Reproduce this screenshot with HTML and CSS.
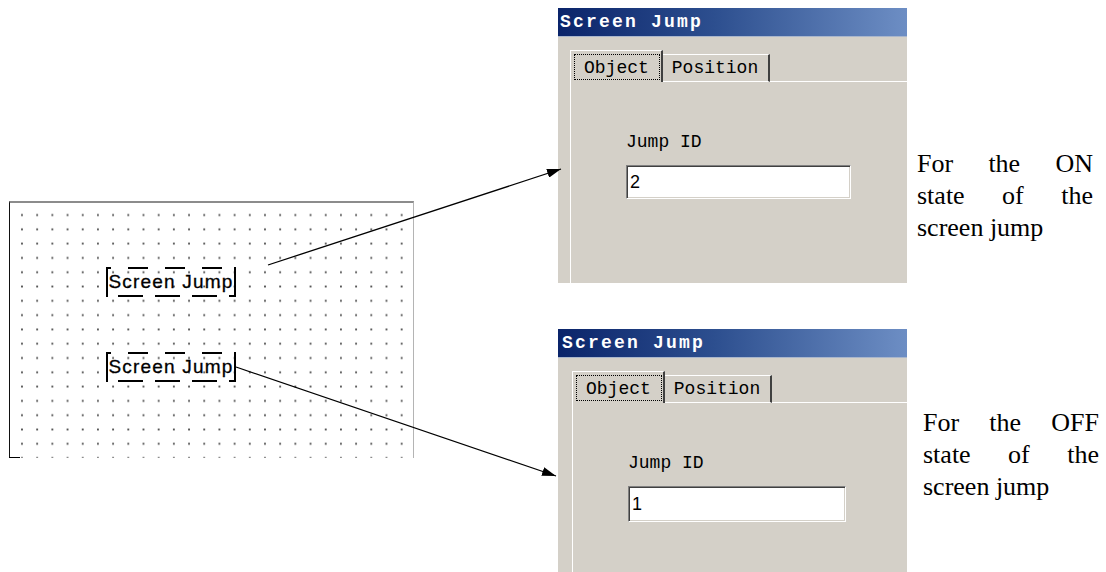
FILE: index.html
```html
<!DOCTYPE html>
<html lang="en">
<head>
  <meta charset="UTF-8">
  <title>Screen Jump</title>
  <link rel="stylesheet" href="styles.css">
</head>
<body>
  <div class="page">
    <div class="editor">
      <div class="canvas">
        <div class="obj obj-on">Screen Jump</div>
        <div class="obj obj-off">Screen Jump</div>
      </div>
    </div>

    <div class="dialogs">
      <div class="dialog">
        <div class="titlebar">Screen Jump</div>
        <div class="dlg-body">
          <div class="tabs">
            <div class="tab active"><span class="focus">Object</span></div>
            <div class="tab">Position</div>
            <div class="tab-fill"></div>
          </div>
          <div class="panel">
            <div class="field-label">Jump ID</div>
            <div class="textbox">2</div>
          </div>
        </div>
      </div>

      <div class="dialog dialog-off">
        <div class="titlebar">Screen Jump</div>
        <div class="dlg-body">
          <div class="tabs">
            <div class="tab active"><span class="focus">Object</span></div>
            <div class="tab">Position</div>
            <div class="tab-fill"></div>
          </div>
          <div class="panel">
            <div class="field-label">Jump ID</div>
            <div class="textbox">1</div>
          </div>
        </div>
      </div>
    </div>

    <div class="notes">
      <p class="note note-on">
        <span class="line">For the ON</span>
        <span class="line">state of the</span>
        <span class="line last">screen jump</span>
      </p>
      <p class="note note-off">
        <span class="line">For the OFF</span>
        <span class="line">state of the</span>
        <span class="line last">screen jump</span>
      </p>
    </div>

    <!-- callout arrows from the canvas objects to their dialogs -->
    <svg class="arrows" width="1106" height="572" viewBox="0 0 1106 572">
      <defs>
        <marker id="head" viewBox="0 0 14 9" refX="14" refY="4.5" markerWidth="14" markerHeight="9" markerUnits="userSpaceOnUse" orient="auto">
          <path d="M0 0 L14 4.5 L0 9 z" fill="#000"/>
        </marker>
      </defs>
      <line x1="268" y1="265" x2="561" y2="169" stroke="#000" stroke-width="1.3" marker-end="url(#head)"/>
      <line x1="236" y1="367" x2="556" y2="476" stroke="#000" stroke-width="1.3" marker-end="url(#head)"/>
    </svg>
  </div>
</body>
</html>
```

FILE: styles.css
```css
body {
  margin: 0;
  background: #fff;
  overflow: hidden;
}
.page {
  position: relative;
  width: 1106px;
  height: 572px;
  display: flex;
  overflow: hidden;
}

/* editor canvas */
.editor {
  flex: none;
  width: 558px;
}
.canvas {
  position: relative;
  box-sizing: border-box;
  width: 405px;
  height: 257px;
  margin: 201px 0 0 9px;
  border-top: 2px solid #8c8c8c;
  border-left: 1px solid #111;
  border-right: 1px solid #b4b4b4;
  background-image: radial-gradient(circle, #555 0, #555 0.8px, transparent 1.3px);
  background-size: 15.2px 14.3px;
  background-position: 4.4px 4.9px;
}
.canvas::after {
  content: "";
  position: absolute;
  left: -1px;
  bottom: 0;
  width: 11px;
  height: 1px;
  background: #000;
}
.obj {
  position: absolute;
  left: 96px;
  box-sizing: border-box;
  width: 130px;
  height: 30px;
  border-left: 2px solid #000;
  border-right: 2px solid #000;
  font-family: "Liberation Sans", Arial, sans-serif;
  font-size: 19px;
  letter-spacing: 1.2px;
  line-height: 30px;
  text-align: center;
  color: #000;
  -webkit-text-stroke: 0.3px #000;
  background:
    linear-gradient(to right, #000 0, #000 20px, transparent 20px) 20px 0 / 37px 2px repeat-x,
    linear-gradient(to right, #000 0, #000 25px, transparent 25px) 10px 100% / 37px 2px repeat-x;
}
.obj-on {
  top: 64px;
}
.obj-off {
  top: 149px;
}

/* dialogs */
.dialogs {
  flex: none;
  width: 349px;
  display: flex;
  flex-direction: column;
  gap: 46px;
  padding-top: 8px;
}
.dialog {
  background: #d4d0c8;
}
.titlebar {
  height: 28px;
  line-height: 29px;
  padding-left: 2px;
  border-bottom: 1px solid #a9b6cc;
  background: linear-gradient(to right, #0a246a, #2d4f8f 45%, #6d8ec4);
  color: #fff;
  font-family: "Liberation Mono", "Courier New", monospace;
  font-weight: bold;
  font-size: 18px;
  letter-spacing: 2.2px;
}
.dlg-body {
  display: flex;
  flex-direction: column;
  height: 246px;
  padding: 13px 0 0 12px;
  box-sizing: border-box;
  font-family: "Liberation Mono", "Courier New", monospace;
  font-size: 18px;
  color: #000;
}
.dialog-off .titlebar {
  padding-left: 4px;
}
.dialog-off .dlg-body {
  height: 214px;
  padding-left: 14px;
}
.tabs {
  display: flex;
  align-items: flex-end;
}
.tab {
  box-sizing: border-box;
  height: 28px;
  line-height: 26px;
  padding: 0 10px 0 9px;
  border-top: 1px solid #fff;
  border-right: 2px solid #404040;
  border-bottom: 1px solid #fff;
}
.tab.active {
  height: 32px;
  padding: 3px 1px 1px 3px;
  border-left: 1px solid #fff;
  border-right: 2px solid #404040;
  border-bottom: none;
}
.focus {
  display: block;
  height: 26px;
  line-height: 26px;
  padding: 0 10px 0 9px;
  box-sizing: border-box;
  border: 1px dotted #000;
}
.tab-fill {
  flex: 1;
  border-bottom: 1px solid #fff;
}
.panel {
  flex: 1;
  padding: 50px 0 0 55px;
  border-left: 1px solid #fff;
}
.field-label {
  line-height: 20px;
}
.textbox {
  box-sizing: border-box;
  width: 225px;
  height: 34px;
  margin-top: 13px;
  padding-left: 3px;
  border: 1px solid;
  border-color: #808080 #fff #fff #808080;
  box-shadow: inset 1px 1px #404040, inset -1px -1px #d4d0c8;
  background: #fff;
  font-family: "Liberation Sans", Arial, sans-serif;
  font-size: 18px;
  line-height: 32px;
}
.dialog-off .textbox {
  width: 218px;
  height: 36px;
  line-height: 34px;
}

/* side notes */
.notes {
  flex: 1;
}
.note {
  width: 176px;
  margin: 0;
  font-family: "Liberation Serif", "Times New Roman", serif;
  font-size: 26px;
  line-height: 32px;
  color: #000;
}
.note-on {
  margin: 148px 0 0 10px;
}
.note-off {
  margin: 163px 0 0 16px;
}
.line {
  display: block;
  text-align: justify;
  text-align-last: justify;
}
.line.last {
  text-align-last: left;
}

.arrows {
  position: absolute;
  left: 0;
  top: 0;
  pointer-events: none;
}
```
